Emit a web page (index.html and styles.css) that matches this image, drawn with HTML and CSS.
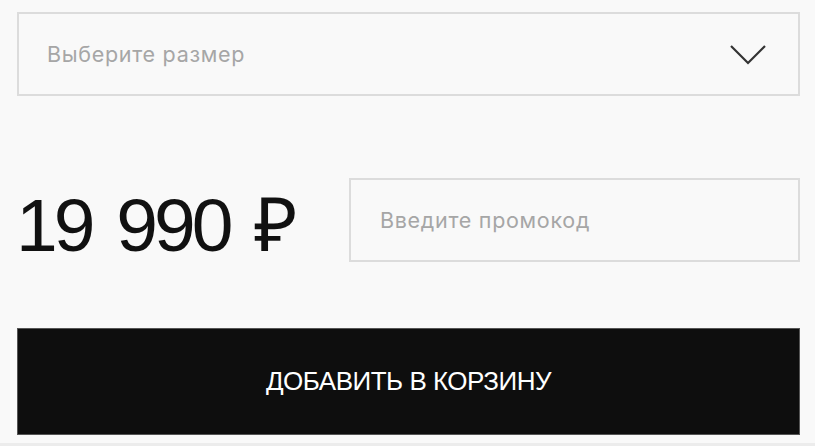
FILE: index.html
```html
<!DOCTYPE html>
<html lang="ru">
<head>
<meta charset="utf-8">
<link rel="stylesheet" href="styles.css">
</head>
<body>
<div class="page">
  <div class="select">
    <span class="placeholder">Выберите размер</span>
    <svg class="chevron" width="36" height="20" viewBox="0 0 36 20"><path d="M1 1 L18 18 L35 1" fill="none" stroke="#333" stroke-width="2.2"/></svg>
  </div>
  <div class="price-row">
    <div class="price">19 990 ₽</div>
    <div class="promo"><span class="placeholder">Введите промокод</span></div>
  </div>
  <button class="cart">ДОБАВИТЬ В КОРЗИНУ</button>
</div>
<div class="bottom-strip"></div>
</body>
</html>
```
FILE: styles.css
```css
html, body {
  margin: 0;
  padding: 0;
  background: #f9f9f9;
  height: 446px;
  overflow: hidden;
}
.page {
  padding: 12px 15px 0 17px;
  font-family: Inter, "Liberation Sans", sans-serif;
}
.select {
  box-sizing: border-box;
  height: 84px;
  border: 2px solid #dcdcdc;
  display: flex;
  align-items: center;
  justify-content: space-between;
  padding: 0 32px 0 28px;
}
.placeholder {
  font-size: 21.5px;
  color: #a6a6a6;
  letter-spacing: 0.7px;
}
.chevron {
  display: block;
  margin-top: 2px;
}
.price-row {
  display: flex;
  height: 84px;
  margin-top: 82px;
}
.price {
  width: 333px;
  height: 84px;
  font-family: "Liberation Sans", sans-serif;
  font-size: 75px;
  line-height: 84px;
  color: #111;
  letter-spacing: -4px;
  word-spacing: 8px;
  margin-top: 5px;
  margin-left: -1px;
}
.promo {
  flex: 1;
  box-sizing: border-box;
  height: 84px;
  border: 2px solid #dcdcdc;
  display: flex;
  align-items: center;
  padding-left: 29px;
}
.cart {
  display: block;
  width: 100%;
  height: 107px;
  margin-top: 66px;
  background: #0e0e0e;
  border: 1px solid #555;
  color: #fff;
  font-family: "Liberation Sans Narrow", "Liberation Sans", sans-serif;
  font-size: 26px;
  letter-spacing: -0.5px;
  padding: 0;
}
.bottom-strip {
  margin-top: 8px;
  height: 4px;
  background: #ececec;
}
```
